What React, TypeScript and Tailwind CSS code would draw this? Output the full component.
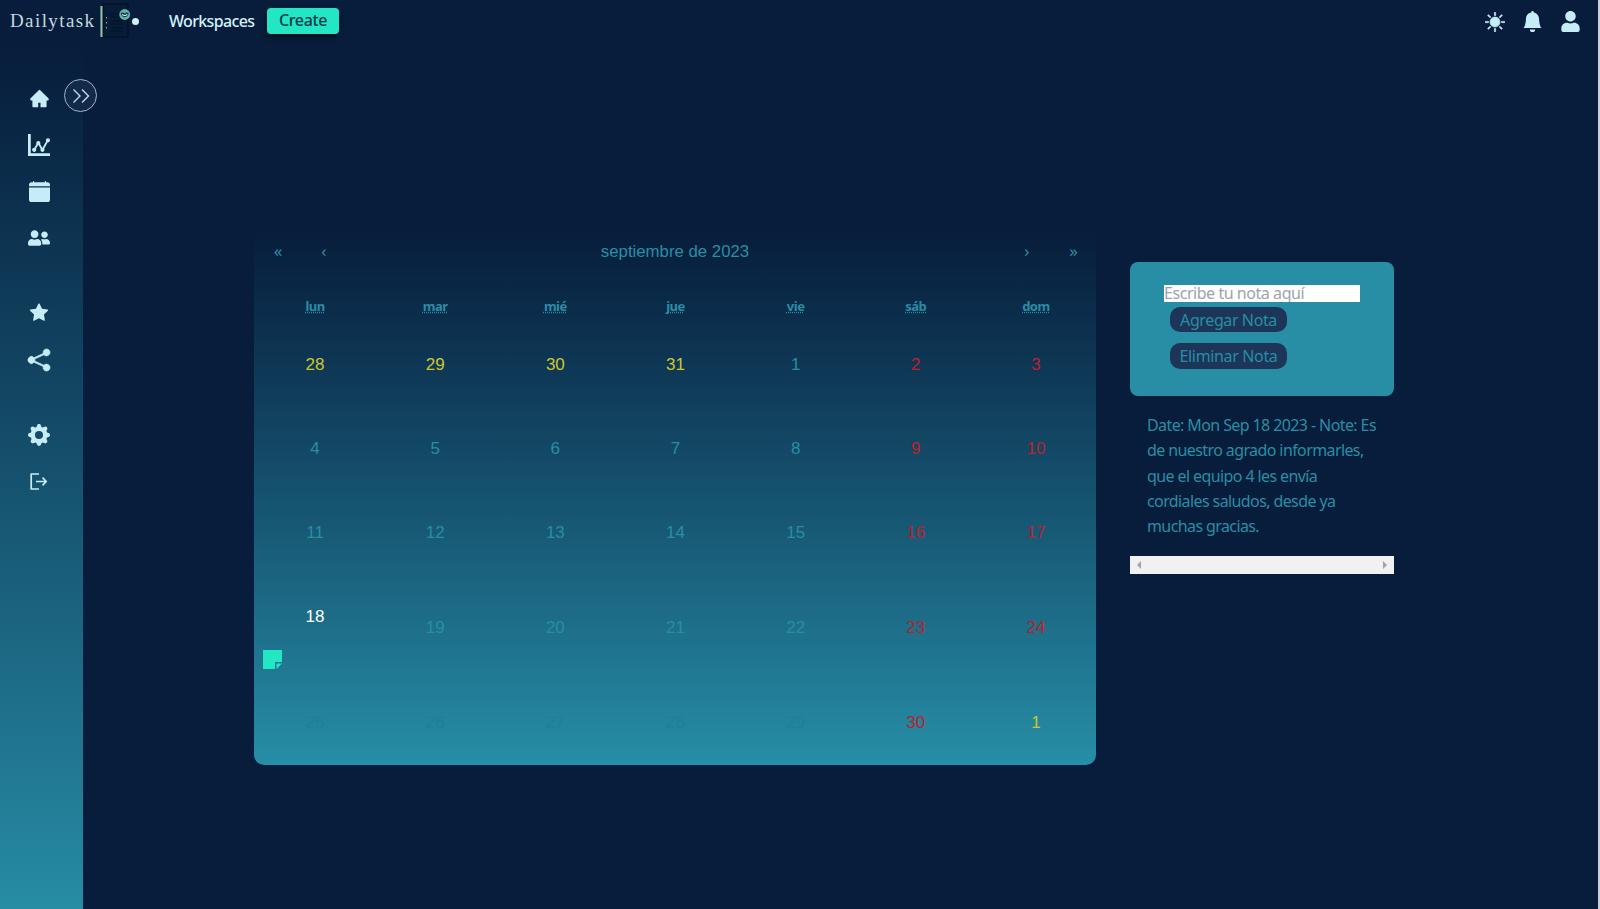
import React from "react";
import type { IconType } from "react-icons";
import { AiFillHome, AiFillStar } from "react-icons/ai";
import { BsBellFill, BsCalendarFill, BsGearFill, BsShareFill, BsSunFill } from "react-icons/bs";
import { FaUser, FaUserFriends } from "react-icons/fa";
import { ImStatsDots } from "react-icons/im";

function Logo() {
  return (
    <div className="flex items-center">
      <span className="w-[88px] font-['Liberation_Serif',serif] text-[19px] leading-6 tracking-[1.4px] whitespace-nowrap text-[#c3d9df]">
        Dailytask
      </span>
      <svg width="42" height="38" viewBox="0 0 42 38" className="ml-[2px]">
        <rect x="3" y="2" width="25" height="33" fill="#071c38" stroke="#020c20" strokeWidth="1" />
        <path d="M10 12h13M10 15h13M10 19h13M10 22h13M10 26h13M10 29h13" stroke="#030f25" strokeWidth="1" fill="none" />
        <path d="M1.5 4v31" stroke="#8fbfa5" strokeWidth="2.2" />
        <path d="M3.5 3v31" stroke="#050f22" strokeWidth="1.2" />
        <path d="M6.5 15v1.500M6.500 20v1.500M6.500 25v1.500" stroke="#7aa5ad" strokeWidth="1" />
        <circle cx="24.7" cy="12.5" r="5.4" fill="#5fb3ad" />
        <path d="M20.700 11.300q2-1.600 4 .3q2-1.900 4-.3q-.6 3.600-4 3.900q-3.400-.3-4-3.900z" fill="#16384a" />
        <path d="M22 12.300q2.700 2.400 5.400 0" stroke="#d5f2ee" strokeWidth="1.100" fill="none" />
        <circle cx="35.5" cy="19.5" r="3.5" fill="#d3f1fb" />
      </svg>
    </div>
  );
}

function ExitIcon() {
  return (
    <svg width="22" height="22" viewBox="0 0 22 22" fill="none" stroke="currentColor" strokeWidth="1.7">
      <path d="M11 4H3.200V19H11M8 11.500H18M14.500 7.700L18.300 11.500L14.500 15.300" strokeLinejoin="round" />
    </svg>
  );
}

function SideIcon({ icon: Icon, size = 22, className = "" }: { icon: IconType; size?: number; className?: string }) {
  return (
    <div className="flex h-[22px] w-[22px] items-center justify-center">
      <Icon size={size} className={className} />
    </div>
  );
}

const weekdays = ["lun", "mar", "mié", "jue", "vie", "sáb", "dom"];
const yellow = "text-[#cec62f]";
const teal = "text-[#278ea5]";
const dim = "text-[#217f98]";
const red = "text-[#b9222f]";
const weekRows: [number, string][][] = [
  [[28, yellow], [29, yellow], [30, yellow], [31, yellow], [1, teal], [2, red], [3, red]],
  [[4, teal], [5, teal], [6, teal], [7, teal], [8, teal], [9, red], [10, red]],
  [[11, teal], [12, teal], [13, teal], [14, teal], [15, teal], [16, red], [17, red]],
  [[18, "text-white"], [19, teal], [20, teal], [21, teal], [22, teal], [23, red], [24, red]],
  [[25, dim], [26, dim], [27, dim], [28, dim], [29, dim], [30, red], [1, yellow]],
];

function Calendar() {
  return (
    <section className="flex h-[535px] w-[842px] flex-col rounded-b-[10px] bg-linear-to-b from-[#071d3b] to-[#278ea7]">
      <div className="flex h-11 items-center text-[#278ea5]">
        <button className="w-[46px] pb-[2px] pl-[2px] text-[17px]">«</button>
        <button className="w-[46px] pb-[2px] pl-[2px] text-[17px]">‹</button>
        <span className="flex-1 text-center font-['Liberation_Sans',sans-serif] text-[16.800px]">septiembre de 2023</span>
        <button className="w-[46px] pb-[2px] text-[17px]">›</button>
        <button className="w-[46px] pb-[2px] pl-[1px] text-[17px]">»</button>
      </div>
      <div className="mt-4 grid h-[34px] grid-cols-7 items-center pl-px text-center text-[13px] font-bold tracking-[-0.5px] text-[#2a8da6]">
        {weekdays.map((d) => (
          <span key={d}>
            <abbr className="underline decoration-dotted underline-offset-1">{d}</abbr>
          </span>
        ))}
      </div>
      <div className="-mt-px grid flex-1 grid-cols-7 grid-rows-[84px_84px_84.500px_105px_84px] pl-px font-['Liberation_Sans',sans-serif] text-[17px] leading-6">
        {weekRows.flatMap((row, r) =>
          row.map(([n, color], c) =>
            n === 18 ? (
              <div key={`${r}-${c}`} className={`flex flex-col pt-[29px] text-center ${color}`}>
                <span>{n}</span>
                <svg width="20" height="20" viewBox="0 0 20 20" className="mt-[21px] ml-[8px]">
                  <path d="M0 0H19V12H12V19H0Z" fill="#22e6c4" />
                  <path d="M13.500 13.500H19L13.500 19Z" fill="#22e6c4" />
                </svg>
              </div>
            ) : (
              <div key={`${r}-${c}`} className={`flex items-center justify-center ${color}`}>
                {n}
              </div>
            ),
          ),
        )}
      </div>
    </section>
  );
}

function Notes() {
  return (
    <aside className="mt-[32px] w-[264px] text-[#278ea5]">
      <div className="flex h-[134px] flex-col items-start rounded-lg bg-[#278ea5] pt-[23px] pl-[34px]">
        <input
          placeholder="Escribe tu nota aquí"
          className="h-[17px] w-[196px] bg-white text-base leading-[17px] tracking-[-0.45px] placeholder:text-[#9ca3af]"
        />
        <button className="mt-[5px] ml-[6px] h-[25px] w-[117px] rounded-[10px] bg-[#1c3558] leading-[24px] tracking-[-0.4px]">
          Agregar Nota
        </button>
        <button className="mt-[11px] ml-[6px] h-[26px] w-[117px] rounded-[10px] bg-[#1c3558] leading-[24px] tracking-[-0.35px]">
          Eliminar Nota
        </button>
      </div>
      <p className="mt-[17px] h-[126px] pl-[17px] leading-[25.3px] tracking-[-0.6px] whitespace-nowrap">
        Date: Mon Sep 18 2023 - Note: Es
        <br />
        de nuestro agrado informarles,
        <br />
        que el equipo 4 les envía
        <br />
        cordiales saludos, desde ya
        <br />
        muchas gracias.
      </p>
      <div className="mt-[17px] flex h-[18px] items-center justify-between bg-[#f1f1f1] px-[7px]">
        <svg width="4" height="8" viewBox="0 0 4 8" fill="#a3a3a3">
          <path d="M4 0V8L0 4Z" />
        </svg>
        <svg width="4" height="8" viewBox="0 0 4 8" fill="#a3a3a3">
          <path d="M0 0V8L4 4Z" />
        </svg>
      </div>
    </aside>
  );
}

export default function App() {
  return (
    <div className="flex h-[909px] w-[1600px] flex-col overflow-hidden border-r-2 border-[#c6cfdb] bg-[#071d3b] font-['Noto_Sans',sans-serif] text-base text-[#c6edf7]">
      <header className="flex h-[46px] shrink-0 items-center pr-[17px] pb-[5px] pl-[10px]">
        <Logo />
        <span className="ml-[27px] w-[86px] text-base font-medium tracking-[-0.65px] text-[#d3f1fb]">Workspaces</span>
        <button className="ml-3 h-[26px] w-[72px] rounded bg-[#22e6c4] leading-[25px] font-medium tracking-[-0.35px] text-[#0b3a4c] shadow-md shadow-black/40">
          Create
        </button>
        <div className="ml-auto flex items-center gap-[17px] pt-[2px]">
          <BsSunFill size={20} className="stroke-current stroke-[0.5]" />
          <BsBellFill size={21} />
          <FaUser size={21} />
        </div>
      </header>
      <div className="flex flex-1">
        <nav className="relative flex w-[83px] shrink-0 flex-col gap-[24.3px] bg-linear-to-b from-[#071d3b] to-[#278ca5] pt-[42px] pl-7">
          <SideIcon icon={AiFillHome} size={21} className="-mt-px" />
          <SideIcon icon={ImStatsDots} />
          <SideIcon icon={BsCalendarFill} size={21} />
          <SideIcon icon={FaUserFriends} />
          <div className="mt-[29px]">
            <SideIcon icon={AiFillStar} />
          </div>
          <SideIcon icon={BsShareFill} className="mt-px overflow-visible stroke-current stroke-[0.5]" />
          <div className="mt-[29px]">
            <SideIcon icon={BsGearFill} className="mt-px" />
          </div>
          <ExitIcon />
          <button className="absolute top-[33px] left-16 flex h-[33px] w-[33px] items-center justify-center rounded-full border border-[#9db4cb] bg-[#13294a]">
            <svg width="18" height="16" viewBox="0 0 18 16" fill="none" stroke="#c3d9ea" strokeWidth="1.4">
              <path d="M1.500 1.500L8 8L1.500 14.500M10 1.500L16.500 8L10 14.500" />
            </svg>
          </button>
        </nav>
        <main className="flex flex-1 gap-[34px] pt-[184px] pl-[171px]">
          <Calendar />
          <Notes />
        </main>
      </div>
    </div>
  );
}
